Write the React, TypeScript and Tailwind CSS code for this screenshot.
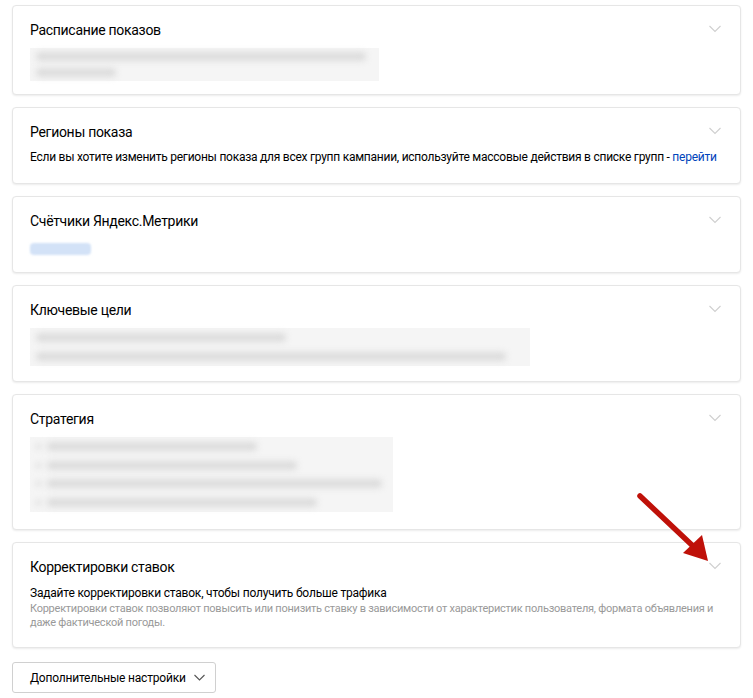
const font = { fontFamily: "Roboto, 'Liberation Sans', sans-serif" };

function Card({ title, children }: { title: string; children?: React.ReactNode }) {
  return (
    <div className="relative rounded-[4px] border border-[#e6e6e6] bg-white pt-[14px] pl-[17px] pr-[17px] shadow-[0_1px_2px_rgba(0,0,0,0.08)]">
      <div className="h-5 text-[14px] leading-5 tracking-[-0.3px] text-black">{title}</div>
      <svg className="absolute right-[19px] top-[19px]" width="12" height="8" viewBox="0 0 12 8">
        <path d="M0.5 1 L6 6.5 L11.5 1" fill="none" stroke="#cfcfcf" strokeWidth="1.1" />
      </svg>
      {children}
    </div>
  );
}

function BlurLines({ widths, bullets, height }: { widths: number[]; bullets?: boolean; height: number }) {
  return (
    <div className="flex flex-col justify-around bg-[#f5f5f5] px-[6px]" style={{ height }}>
      {widths.map((w, i) => (
        <div key={i} className="flex items-center gap-[6px] blur-[3px]">
          {bullets && <div className="h-[5px] w-[5px] rounded-full bg-[#d5d5d5]" />}
          <div className="h-[9px] rounded-sm bg-[#dcdcdc]" style={{ width: w }} />
        </div>
      ))}
    </div>
  );
}

export default function App() {
  return (
    <div className="relative min-h-[698px] bg-white px-3 pt-[5px]" style={font}>
      <div className="flex flex-col gap-3">
        <Card title="Расписание показов">
          <div className="mt-2 mb-[13px] w-[349px]">
            <BlurLines widths={[330, 80]} height={33} />
          </div>
        </Card>

        <Card title="Регионы показа">
          <div className="mt-[6px] mb-[17px] text-[12px] leading-[18px] tracking-[-0.25px] text-black">
            Если вы хотите изменить регионы показа для всех групп кампании, используйте массовые действия в списке групп -{" "}
            <span className="text-[#0044bb]">перейти</span>
          </div>
        </Card>

        <Card title="Счётчики Яндекс.Метрики">
          <div className="mt-[12px] mb-[17px] h-3 w-[61px] rounded-sm bg-[#d3e2f7] blur-[1px]" />
        </Card>

        <Card title="Ключевые цели">
          <div className="mt-2 mb-[15px] w-[500px]">
            <BlurLines widths={[250, 470]} height={38} />
          </div>
        </Card>

        <Card title="Стратегия">
          <div className="mt-2 mb-[17px] w-[363px]">
            <BlurLines widths={[210, 250, 335, 270]} bullets height={75} />
          </div>
        </Card>

        <Card title="Корректировки ставок">
          <div className="mt-[7px] text-[12px] leading-[18px] tracking-[-0.2px] text-black">
            Задайте корректировки ставок, чтобы получить больше трафика
          </div>
          <div className="mb-[17px] text-[11px] leading-[14px] tracking-[-0.25px] text-[#999999]">
            Корректировки ставок позволяют повысить или понизить ставку в зависимости от характеристик пользователя, формата объявления и даже фактической погоды.
          </div>
        </Card>
      </div>

      <div className="mt-[14px]">
        <button className="flex h-[31px] items-center gap-[8px] rounded-[3px] border border-[#d0d0d0] bg-white pl-[17px] pr-[10px] text-[12px] tracking-[-0.2px] text-black">
          Дополнительные настройки
          <svg width="11" height="7" viewBox="0 0 11 7">
            <path d="M0.5 1 L5.5 6 L10.5 1" fill="none" stroke="#555" strokeWidth="1.1" />
          </svg>
        </button>
      </div>

      <svg className="pointer-events-none absolute left-[634px] top-[490px]" width="80" height="76" viewBox="0 0 80 76">
        <line x1="6" y1="6" x2="60" y2="57" stroke="#bf1109" strokeWidth="5.5" strokeLinecap="round" />
        <polygon points="74,71 49,63 68,45" fill="#bf1109" />
      </svg>
    </div>
  );
}
